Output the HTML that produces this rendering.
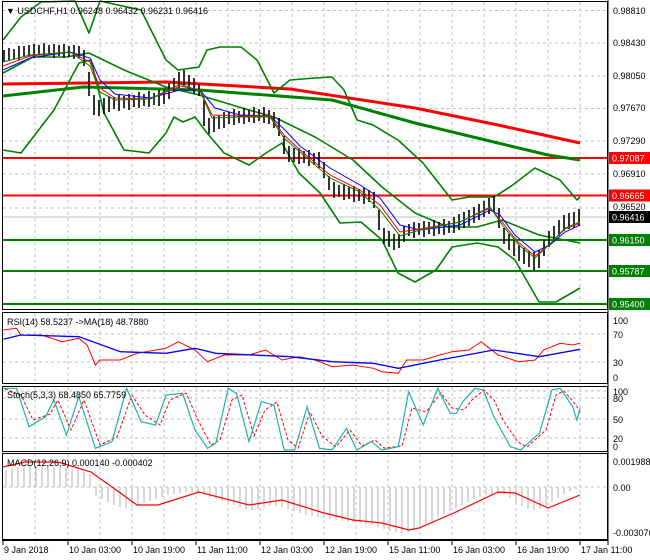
<!DOCTYPE html>
<html><head><meta charset="utf-8"><style>
html,body{margin:0;padding:0;background:#fff;width:650px;height:560px;overflow:hidden}
svg{display:block}
text{font-family:"Liberation Sans",sans-serif;font-size:9px;fill:#000}
.w{fill:#fff}
</style></head><body>
<svg width="650" height="560" viewBox="0 0 650 560" xmlns="http://www.w3.org/2000/svg">
<rect width="650" height="560" fill="#fff"/>
<path stroke="#c0c0c0" stroke-dasharray="3,3" fill="none" d="M35,2V309M68,2V309M100,2V309M132,2V309M164,2V309M196,2V309M228,2V309M260,2V309M292,2V309M324,2V309M356,2V309M388,2V309M420,2V309M452,2V309M484,2V309M516,2V309M548,2V309M580,2V309
M35,313V383M68,313V383M100,313V383M132,313V383M164,313V383M196,313V383M228,313V383M260,313V383M292,313V383M324,313V383M356,313V383M388,313V383M420,313V383M452,313V383M484,313V383M516,313V383M548,313V383M580,313V383
M35,387V451M68,387V451M100,387V451M132,387V451M164,387V451M196,387V451M228,387V451M260,387V451M292,387V451M324,387V451M356,387V451M388,387V451M420,387V451M452,387V451M484,387V451M516,387V451M548,387V451M580,387V451
M35,454V539M68,454V539M100,454V539M132,454V539M164,454V539M196,454V539M228,454V539M260,454V539M292,454V539M324,454V539M356,454V539M388,454V539M420,454V539M452,454V539M484,454V539M516,454V539M548,454V539M580,454V539
M3,10.5H607M3,43H607M3,76H607M3,108.5H607M3,141H607M3,174H607M3,208H607
M3,334H607M3,362H607M3,391H607M3,398H607M3,419H607M3,438H607M3,487H607"/>
<line x1="3" y1="217" x2="607" y2="217" stroke="#c0c0c0"/>
<path stroke="#f00" stroke-width="2" d="M3,158H607M3,195.5H607"/>
<path stroke="#008000" stroke-width="2" d="M3,240H607M3,271H607M3,304H607"/>
<polyline fill="none" stroke="#f00" stroke-width="3" points="3,84 166,82 290,89 415,108 498,125 580,143"/>
<polyline fill="none" stroke="#008000" stroke-width="3" points="3,96 83,87 199,90 332,100 415,123 498,143 548,155 580,160"/>
<g fill="none" stroke="#008000" stroke-width="1.6" stroke-linejoin="round">
<polyline points="3,40 21,17 41,2 75,1 89,33 100,1 141,10 166,60 178,70 199,67 207,50 220,47 241,47 257,60 274,93 290,80 315,78 332,77 344,90 357,120 373,125 398,140 423,163 452,200 469,197 494,197 510,187 535,168 560,180 577,200 580,197"/>
<polyline points="3,73 33,57 66,57 89,53 124,70 166,87 199,95 249,110 274,117 315,137 353,160 382,187 415,213 448,227 477,227 502,220 539,235 580,243"/>
<polyline points="3,150 21,153 54,110 79,63 91,60 104,113 124,150 149,153 166,133 174,117 183,122 195,117 207,133 224,153 249,165 266,153 282,143 299,173 320,193 340,223 361,222 382,240 398,273 415,282 436,270 452,247 477,243 498,247 515,260 539,302 556,302 580,288"/>
</g>
<path fill="none" stroke="#000" stroke-width="1.6" d="M4,50V62M9,48V60M14,49V59M19,46V60M24,46V57M29,45V57M34,44V58M39,45V55M44,43V57M49,45V55M54,44V58M59,45V56M64,44V58M69,46V57M74,45V59M79,46V58M84,50V66M89,72V96M94,95V115M99,100V116M104,98V114M109,96V112M114,97V109M119,95V111M124,96V108M129,94V110M134,95V107M139,92V108M144,94V106M149,91V107M154,93V105M159,90V106M164,90V104M169,83V99M174,78V92M179,72V88M184,70V86M189,75V89M194,78V94M199,84V96M204,100V126M209,118V134M214,116V132M219,115V129M224,112V128M229,112V124M234,109V125M239,111V123M244,108V124M249,110V122M254,107V123M259,109V121M264,107V123M269,110V124M274,112V128M279,118V136M284,136V154M289,146V162M294,148V162M299,148V164M304,151V163M309,150V166M314,153V165M319,152V168M324,162V178M329,176V190M334,182V198M339,185V197M344,184V200M349,187V199M354,186V202M359,189V201M364,188V204M369,190V202M374,192V208M379,210V230M384,228V244M389,231V247M394,234V250M399,234V248M404,226V242M409,224V236M414,222V238M419,223V235M424,221V237M429,222V234M434,220V236M439,222V234M444,219V235M449,221V233M454,217V233M459,214V230M464,212V228M469,210V226M474,207V223M479,204V220M484,201V217M489,198V214M494,196V212M499,208V228M504,228V244M509,234V250M514,240V256M519,245V261M524,248V264M529,251V267M534,252V270M539,250V268M544,240V256M549,231V247M554,226V242M559,220V236M564,215V231M569,213V229M574,212V228M579,209V226"/>
<polyline fill="none" stroke="#00f" stroke-width="1" points="3,70 30,58 70,52 90,58 100,80 115,94 150,98 180,90 200,90 215,108 240,115 270,116 285,130 300,146 330,168 360,185 380,198 400,225 420,230 460,225 490,210 500,215 515,235 535,252 550,245 565,232 580,225"/>
<polyline fill="none" stroke="#f00" stroke-width="1" points="3,66 30,56 70,52 90,62 100,88 115,98 150,99 180,86 200,90 212,115 240,116 270,116 284,135 300,150 330,175 360,190 380,205 400,232 420,229 460,222 490,208 502,222 518,242 535,256 550,244 565,229 580,223"/>
<polyline fill="none" stroke="#008000" stroke-width="1" points="3,62 30,55 70,52 90,66 100,92 115,100 150,99 180,84 200,91 212,118 240,117 270,117 284,138 300,152 330,178 360,192 380,210 400,236 420,230 460,222 490,207 503,226 520,246 535,258 550,244 565,228 580,222"/>
<polyline fill="none" stroke="#f00" stroke-width="1" points="3.3,330 16.6,328.3 20.7,335 41.5,335 62.2,341.7 78.8,338.3 87.1,345 95.4,365 99.6,360 120.3,360 136.9,353.3 166,348.3 178.4,341.7 195,350 207.5,361.7 224.1,355 249,355 265.6,350 282.2,360 298.8,356.7 315.4,360 332,366.7 352.7,365 373.4,368.3 381.7,371.7 398.3,373.3 406.6,360 423.2,360 439.8,355 452.3,351.7 468.9,350 481.3,341.7 489.6,348.3 498,355 518.7,361.7 535.3,360 543.6,350 560.2,343.3 572.6,345 580.1,343.3"/>
<polyline fill="none" stroke="#00f" stroke-width="1.3" points="3.3,339.3 20.7,335 78.8,336.7 120.3,351.7 166,353.3 195,348.3 215.8,353.3 290.5,356.7 332,361.7 373.4,363.3 398.3,368.3 439.8,360 493.8,350 539.4,356.7 580.1,349.3"/>
<polyline fill="none" stroke="#f00" stroke-width="1" stroke-dasharray="3,2" points="5,389 21,395 33,420 50,414 58,400 71,430 84,400 100,445 117,437 132,395 145,415 160,425 170,400 186,393 198,420 211,445 220,440 232,400 242,395 254,436 265,410 277,402 288,440 298,448 310,412 322,436 336,447 350,430 362,446 375,440 384,448 402,446 412,408 426,412 441,393 452,408 464,410 472,400 484,390 494,400 503,420 518,442 527,447 546,430 556,395 564,391 576,405 580,412"/>
<polyline fill="none" stroke="#20b2aa" stroke-width="1.2" points="3.3,388.3 16.6,388.3 29,426.7 45.6,416.7 53.9,400 66.4,435 78.8,396.7 95.4,448.3 112,441.7 126.6,388.3 141.1,421.7 155.6,425 166,395 182.6,393.3 195,430 207.5,448.3 215.8,443.3 228.2,388.3 236.5,393.3 249,441.7 261.4,401.7 273.9,405 284.2,450 294.6,450 307.1,406.7 319.5,448.3 332,450 346.5,428.3 356.8,450 371.4,441.7 381.7,450 398.3,446.7 408.7,391.7 423.2,425 437.8,388.3 450.2,413.3 456.4,413.3 462.7,401.7 475.1,388.3 483.4,390 493.8,416.7 510.4,446.7 520.7,450 539.4,433.3 551.9,390 560.2,388.3 572.6,406.7 576.8,420 580.1,408.3"/>
<path fill="none" stroke="#b0b0b0" stroke-width="1" d="M6,487V470M12,487V468M18,487V467M24,487V466M30,487V466M36,487V466M42,487V466M48,487V466M54,487V467M60,487V467M66,487V468M72,487V469M78,487V470M84,487V472M90,487V475M96,487V496M102,487V499M108,487V502M114,487V505M120,487V507M126,487V508M132,487V507M138,487V505M144,487V503M150,487V501M156,487V499M162,487V497M168,487V495M174,487V494M180,487V493M186,487V492M192,487V492M198,487V493M204,487V495M210,487V497M216,487V499M222,487V501M228,487V503M234,487V505M240,487V507M246,487V509M252,487V510M258,487V509M264,487V507M270,487V506M276,487V506M282,487V507M288,487V509M294,487V511M300,487V513M306,487V515M312,487V516M318,487V517M324,487V518M330,487V519M336,487V520M342,487V521M348,487V522M354,487V522M360,487V523M366,487V524M372,487V525M378,487V527M384,487V529M390,487V531M396,487V532M402,487V533M408,487V532M414,487V530M420,487V527M426,487V524M432,487V521M438,487V517M444,487V514M450,487V511M456,487V508M462,487V505M468,487V502M474,487V499M480,487V497M486,487V495M492,487V494M498,487V494M504,487V495M510,487V498M516,487V502M522,487V506M528,487V509M534,487V510M540,487V509M546,487V506M552,487V502M558,487V498M564,487V494M570,487V491M576,487V489"/>
<polyline fill="none" stroke="#f00" stroke-width="1.2" points="3,467 25,462 58,462 91,472 137,505 158,505 199,492 249,505 282,500 324,513 353,520 382,523 409,530 419,528 456,512 498,492 515,493 548,508 580,495"/>
<rect x="2.5" y="1.5" width="605" height="308" fill="none" stroke="#000"/>
<rect x="2.5" y="312.5" width="605" height="71" fill="none" stroke="#000"/>
<rect x="2.5" y="386.5" width="605" height="65" fill="none" stroke="#000"/>
<rect x="2.5" y="453.5" width="605" height="86" fill="none" stroke="#000"/>
<line x1="608" y1="0" x2="608" y2="545" stroke="#000"/>
<line x1="2" y1="540.5" x2="608" y2="540.5" stroke="#000"/>
<text x="6" y="14">▼ USDCHF,H1  0.96248 0.96432 0.96231 0.96416</text>
<text x="7" y="325">RSI(14) 58.5237  -&gt;MA(18) 48.7880</text>
<text x="7" y="398">Stoch(5,3,3) 68.4850 65.7759</text>
<text x="7" y="466">MACD(12,26,9) 0.000140 -0.000402</text>
<text x="613" y="14">0.98810</text>
<text x="613" y="46">0.98430</text>
<text x="613" y="79">0.98050</text>
<text x="613" y="111">0.97670</text>
<text x="613" y="144">0.97290</text>
<text x="613" y="177">0.96910</text>
<text x="613" y="210">0.96520</text>
<rect x="609" y="152" width="41" height="12" fill="#f00"/><text class="w" x="612" y="161.5">0.97087</text>
<rect x="609" y="189.5" width="41" height="12" fill="#f00"/><text class="w" x="612" y="199">0.96665</text>
<rect x="609" y="211" width="41" height="12" fill="#000"/><text class="w" x="612" y="220.5">0.96416</text>
<rect x="609" y="234" width="41" height="12" fill="#008000"/><text class="w" x="612" y="243.5">0.96150</text>
<rect x="609" y="265" width="41" height="12" fill="#008000"/><text class="w" x="612" y="274.5">0.95787</text>
<rect x="609" y="298" width="41" height="12" fill="#008000"/><text class="w" x="612" y="307.5">0.95400</text>
<text x="613" y="324">100</text><text x="613" y="338">70</text><text x="613" y="366">30</text><text x="613" y="381">0</text>
<text x="613" y="395">100</text><text x="613" y="402">80</text><text x="613" y="423">50</text><text x="613" y="442">20</text><text x="613" y="450" font-size="8">0</text>
<text x="613" y="465">0.001988</text><text x="613" y="491">0.00</text><text x="613" y="536">-0.003076</text>
<path stroke="#000" d="M3,540V545M68,540V545M132,540V545M196,540V545M260,540V545M324,540V545M388,540V545M452,540V545M516,540V545M580,540V545"/>
<text x="4" y="553">9 Jan 2018</text>
<text x="69" y="553">10 Jan 03:00</text>
<text x="133" y="553">10 Jan 19:00</text>
<text x="197" y="553">11 Jan 11:00</text>
<text x="261" y="553">12 Jan 03:00</text>
<text x="325" y="553">12 Jan 19:00</text>
<text x="389" y="553">15 Jan 11:00</text>
<text x="453" y="553">16 Jan 03:00</text>
<text x="517" y="553">16 Jan 19:00</text>
<text x="581" y="553">17 Jan 11:00</text>
</svg>
</body></html>
